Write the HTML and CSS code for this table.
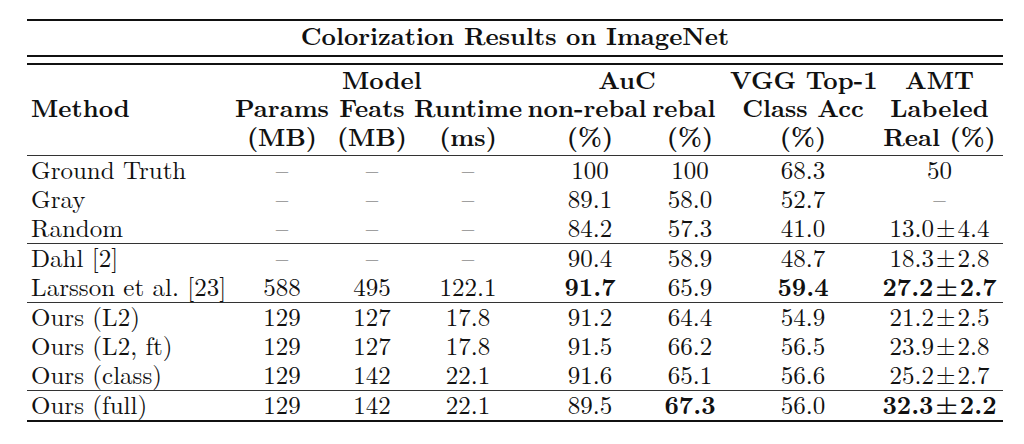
FILE: index.html
```html
<!DOCTYPE html>
<html lang="en">
<head>
<meta charset="utf-8">
<title>Colorization Results on ImageNet</title>
<link rel="stylesheet" href="styles.css">
</head>
<body>
<div class="paper">
  <div class="caption">Colorization Results on ImageNet</div>
  <div class="rule"></div>
  <table class="results">
    <colgroup>
      <col class="c-method">
      <col class="c-params">
      <col class="c-feats">
      <col class="c-runtime">
      <col class="c-nonrebal">
      <col class="c-rebal">
      <col class="c-vgg">
      <col class="c-amt">
    </colgroup>
    <thead>
      <tr class="h1">
        <th></th><th></th><th class="model">Model</th><th></th>
        <th colspan="2">AuC</th><th>VGG Top-1</th><th>AMT</th>
      </tr>
      <tr class="h2">
        <th class="left">Method</th><th>Params</th><th>Feats</th><th>Runtime</th>
        <th>non-rebal</th><th class="rebal">rebal</th><th>Class Acc</th><th>Labeled</th>
      </tr>
      <tr class="h3">
        <th></th><th>(MB)</th><th>(MB)</th><th>(ms)</th>
        <th class="nr">(%)</th><th>(%)</th><th>(%)</th><th>Real (%)</th>
      </tr>
    </thead>
    <tbody>
      <tr><td class="name">Ground Truth</td><td class="dash">–</td><td class="dash">–</td><td class="dash">–</td><td class="nr">100</td><td>100</td><td>68.3</td><td>50</td></tr>
      <tr><td class="name">Gray</td><td class="dash">–</td><td class="dash">–</td><td class="dash">–</td><td class="nr">89.1</td><td>58.0</td><td>52.7</td><td class="dash">–</td></tr>
      <tr><td class="name">Random</td><td class="dash">–</td><td class="dash">–</td><td class="dash">–</td><td class="nr">84.2</td><td>57.3</td><td>41.0</td><td>13.0<span class="pm">±</span>4.4</td></tr>
    </tbody>
    <tbody>
      <tr><td class="name">Dahl [2]</td><td class="dash">–</td><td class="dash">–</td><td class="dash">–</td><td class="nr">90.4</td><td>58.9</td><td>48.7</td><td>18.3<span class="pm">±</span>2.8</td></tr>
      <tr><td class="name">Larsson et al. [23]</td><td>588</td><td>495</td><td>122.1</td><td class="nr"><b>91.7</b></td><td>65.9</td><td><b>59.4</b></td><td><b>27.2<span class="pm">±</span>2.7</b></td></tr>
    </tbody>
    <tbody>
      <tr><td class="name">Ours (L2)</td><td>129</td><td>127</td><td>17.8</td><td class="nr">91.2</td><td>64.4</td><td>54.9</td><td>21.2<span class="pm">±</span>2.5</td></tr>
      <tr><td class="name">Ours (L2, ft)</td><td>129</td><td>127</td><td>17.8</td><td class="nr">91.5</td><td>66.2</td><td>56.5</td><td>23.9<span class="pm">±</span>2.8</td></tr>
      <tr><td class="name">Ours (class)</td><td>129</td><td>142</td><td>22.1</td><td class="nr">91.6</td><td>65.1</td><td>56.6</td><td>25.2<span class="pm">±</span>2.7</td></tr>
    </tbody>
    <tbody>
      <tr><td class="name">Ours (full)</td><td>129</td><td>142</td><td>22.1</td><td class="nr">89.5</td><td><b>67.3</b></td><td>56.0</td><td><b>32.3<span class="pm">±</span>2.2</b></td></tr>
    </tbody>
  </table>
  <div class="rule bottom"></div>
</div>
</body>
</html>
```
FILE: styles.css
```css
html, body {
  margin: 0;
  padding: 0;
  background: #ffffff;
}

.paper {
  width: 976px;
  margin: 0 0 0 27px;
  padding-top: 19px;
  color: #111111;
  font-family: "Latin Modern Roman", "CMU Serif", "Liberation Serif", serif;
  font-size: 25px;
}

.caption {
  border-top: 2px solid #111111;
  border-bottom: 2px solid #111111;
  padding: 0 0 6px;
  line-height: 28px;
  text-align: center;
  font-weight: bold;
}

.rule {
  height: 2px;
  margin-top: 6px;
  background: #111111;
}

.rule.bottom {
  margin-top: 0;
}

.results {
  width: 976px;
  table-layout: fixed;
  border-collapse: collapse;
  border-spacing: 0;
  font-family: "Latin Modern Roman", "CMU Serif", "Liberation Serif", serif;
  font-size: 25px;
}

.c-method { width: 205px; }
.c-params { width: 100px; }
.c-feats { width: 80px; }
.c-runtime { width: 112px; }
.c-nonrebal { width: 126px; }
.c-rebal { width: 80px; }
.c-vgg { width: 146px; }
.c-amt { width: 127px; }

.results th {
  font-weight: bold;
  line-height: 28px;
  height: 28px;
  padding: 0;
  text-align: center;
  vertical-align: baseline;
  white-space: nowrap;
}

.results .h1 th { padding-top: 0; }
.results .h2 th { height: 29px; }
.results .h3 th { padding-bottom: 5px; }
.results thead { border-bottom: 1px solid #333333; }

.results th.left { text-align: left; padding-left: 4px; }
.results th.model { padding-left: 10px; }
.results th.rebal { padding-right: 12px; }
.results th.nr { padding-left: 6px; }

.results td {
  padding: 0 0 4px;
  line-height: 25px;
  text-align: center;
  vertical-align: baseline;
  white-space: nowrap;
}

.results tbody:first-of-type tr:first-child td { padding-top: 0; }

.results td.name {
  text-align: left;
  padding-left: 4px;
}

.results td.nr { padding-left: 6px; }

.results td.dash { color: #555555; }

.results tbody + tbody { border-top: 1px solid #333333; }

.results b { font-weight: bold; }

.pm { margin: 0 2px; }
```
